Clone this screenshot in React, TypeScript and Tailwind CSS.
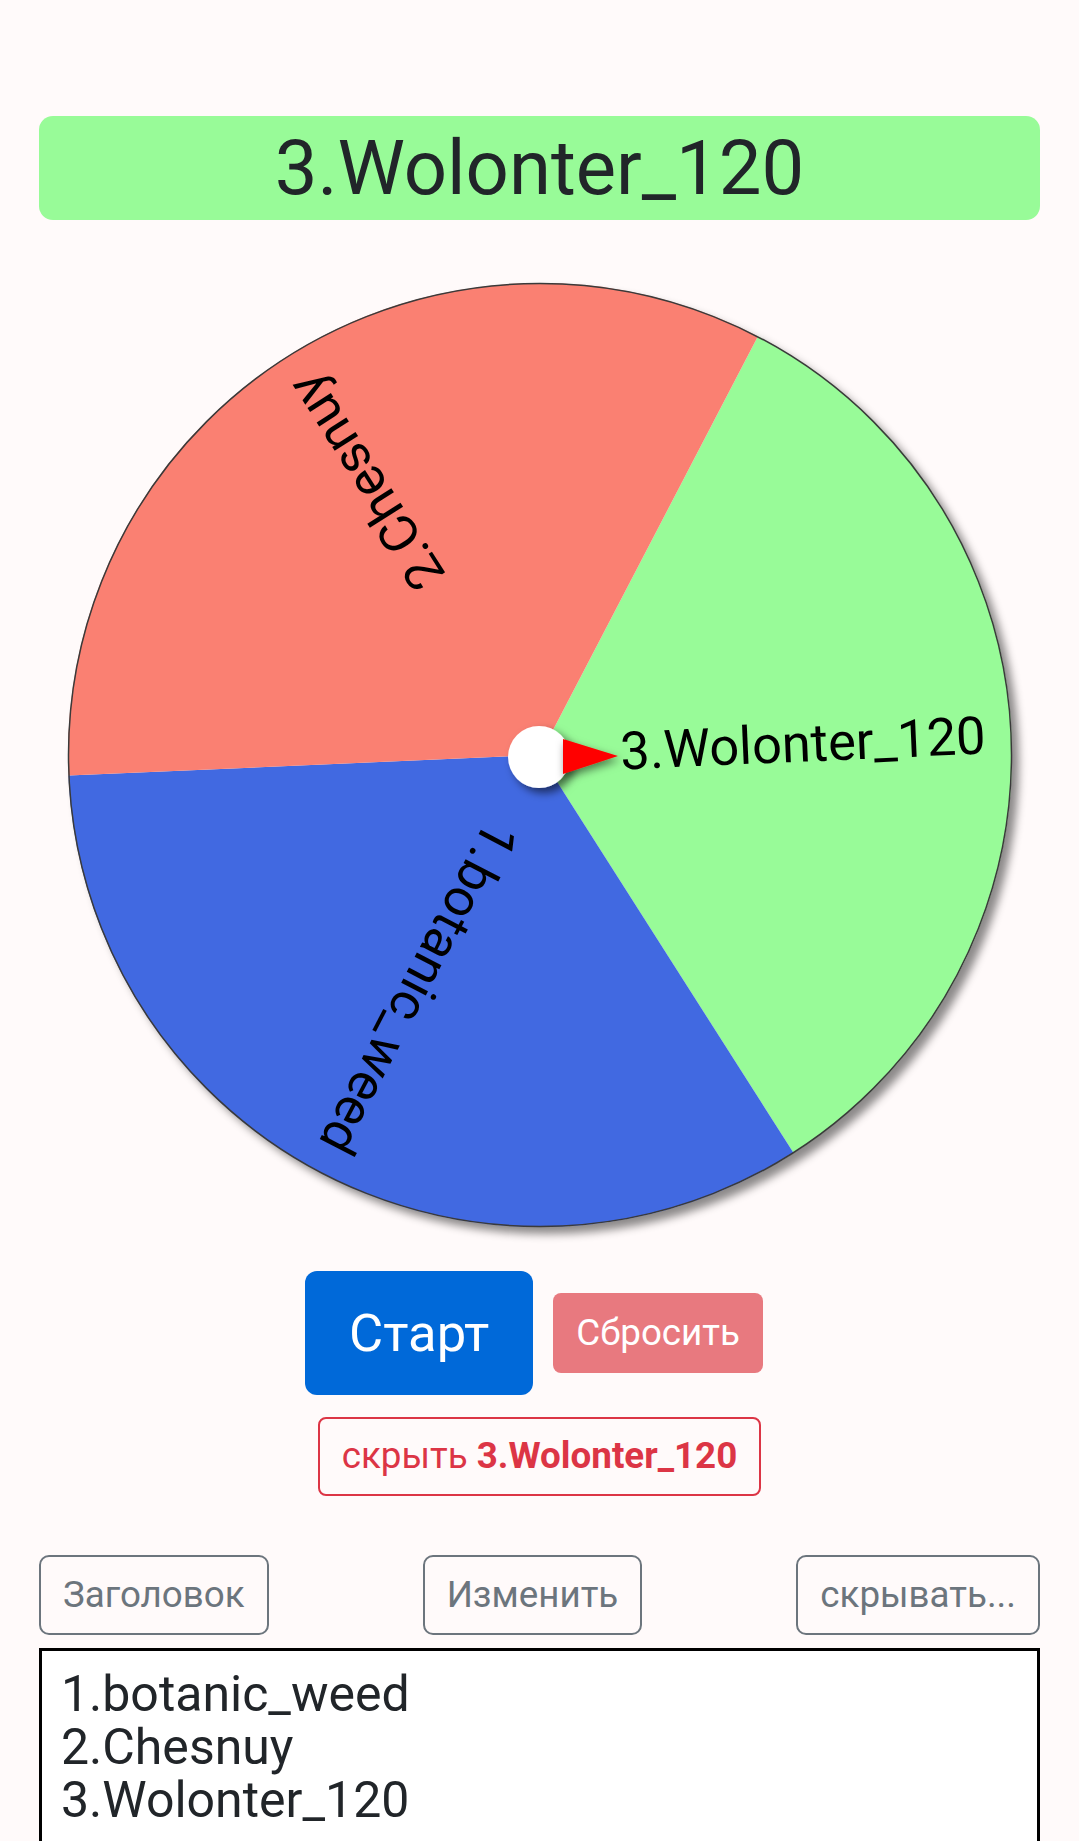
import React from "react";

const SIZE = 944;
const C = SIZE / 2;
const R = 472;

const segments = [
  { label: "3.Wolonter_120", color: "#98fb98", from: -62.5, to: 57.5 },
  { label: "1.botanic_weed", color: "#4169e1", from: 57.5, to: 177.5 },
  { label: "2.Chesnuy", color: "#fa8072", from: 177.5, to: 297.5 },
];

const point = (deg: number, r: number) => {
  const a = (deg * Math.PI) / 180;
  return [C + r * Math.cos(a), C + r * Math.sin(a)];
};

const sectorPath = (from: number, to: number) => {
  const [x1, y1] = point(from, R);
  const [x2, y2] = point(to, R);
  return `M ${C} ${C} L ${x1} ${y1} A ${R} ${R} 0 0 1 ${x2} ${y2} Z`;
};

const Wheel = () => {
  return (
    <div className="mx-auto mt-[63px] h-[944px] w-[944px] rounded-full shadow-[7px_7px_9px_rgba(0,0,0,0.45)]">
      <svg width={SIZE} height={SIZE} viewBox={`0 0 ${SIZE} ${SIZE}`} className="overflow-visible">
        <defs>
          <filter id="pinShadow" x="-50%" y="-50%" width="200%" height="200%">
            <feDropShadow dx="5" dy="5" stdDeviation="4" floodColor="#000" floodOpacity="0.55" />
          </filter>
          <filter id="arrowShadow" x="-50%" y="-50%" width="200%" height="200%">
            <feDropShadow dx="2" dy="4" stdDeviation="4" floodColor="#000" floodOpacity="0.5" />
          </filter>
        </defs>

        {/* sectors */}
        {segments.map((s) => (
          <path key={s.label} d={sectorPath(s.from, s.to)} fill={s.color} />
        ))}
        <circle cx={C} cy={C} r={R - 0.5} fill="none" stroke="#3a3a3a" strokeWidth={1.5} />

        {/* labels */}
        {segments.map((s) => {
          const mid = (s.from + s.to) / 2;
          return (
            <text
              key={s.label + "-t"}
              x={C + 446}
              y={C}
              transform={`rotate(${mid} ${C} ${C})`}
              textAnchor="end"
              dominantBaseline="central"
              fill="#000"
              fontSize={52.5}
              fontFamily="Roboto, sans-serif"
            >
              {s.label}
            </text>
          );
        })}

        {/* pointer */}
        <circle cx={C - 1} cy={C + 2} r={31} fill="#ffffff" filter="url(#pinShadow)" />
        <polygon
          points={`${C + 23},${C - 16} ${C + 23},${C + 19} ${C + 78},${C + 1}`}
          fill="#ff0000"
          filter="url(#arrowShadow)"
        />
      </svg>
    </div>
  );
};

const App = () => {
  return (
    <div className="min-h-screen bg-[#fffafa] font-['Roboto',sans-serif] text-[#212529]">
      <div className="px-[39px] pt-[116px] pb-[40px]">
        {/* Result banner */}
        <div className="flex h-[104px] items-center justify-center rounded-[14px] bg-[#98fb98] text-[76px] leading-none">
          3.Wolonter_120
        </div>

        <Wheel />

        {/* Start / reset */}
        <div className="mt-[44px] flex items-center justify-center gap-[20px] pr-[11px]">
          <button className="flex h-[124px] items-center rounded-[12px] bg-[#0069d9] px-[44px] text-[52.5px] leading-none text-white">
            Старт
          </button>
          <button className="flex h-[80px] items-center rounded-[8px] bg-[#e8797f] px-[23px] text-[36.75px] leading-none text-white">
            Сбросить
          </button>
        </div>

        {/* Hide current */}
        <div className="mt-[22px] flex justify-center">
          <button className="flex h-[79px] items-center rounded-[8px] border-2 border-[#dc3545] px-[22px] text-[36.75px] leading-none text-[#dc3545]">
            скрыть&nbsp;<span className="font-bold">3.Wolonter_120</span>
          </button>
        </div>

        {/* Tools */}
        <div className="mt-[59px] flex items-center justify-between">
          <button className="flex h-[80px] items-center rounded-[10px] border-2 border-[#6c757d] px-[22px] text-[36.75px] leading-none text-[#6c757d]">
            Заголовок
          </button>
          <button className="flex h-[80px] items-center rounded-[10px] border-2 border-[#6c757d] px-[22px] text-[36.75px] leading-none text-[#6c757d]">
            Изменить
          </button>
          <button className="flex h-[80px] items-center rounded-[10px] border-2 border-[#6c757d] px-[22px] text-[36.75px] leading-none text-[#6c757d]">
            скрывать...
          </button>
        </div>

        <textarea
          readOnly
          className="mt-[13px] block h-[320px] w-full resize-none border-[3px] border-black bg-white px-[19px] pt-[17px] text-[50px] leading-[53px] text-[#212529] outline-none"
          defaultValue={"1.botanic_weed\n2.Chesnuy\n3.Wolonter_120"}
        />
      </div>
    </div>
  );
};

export default App;
